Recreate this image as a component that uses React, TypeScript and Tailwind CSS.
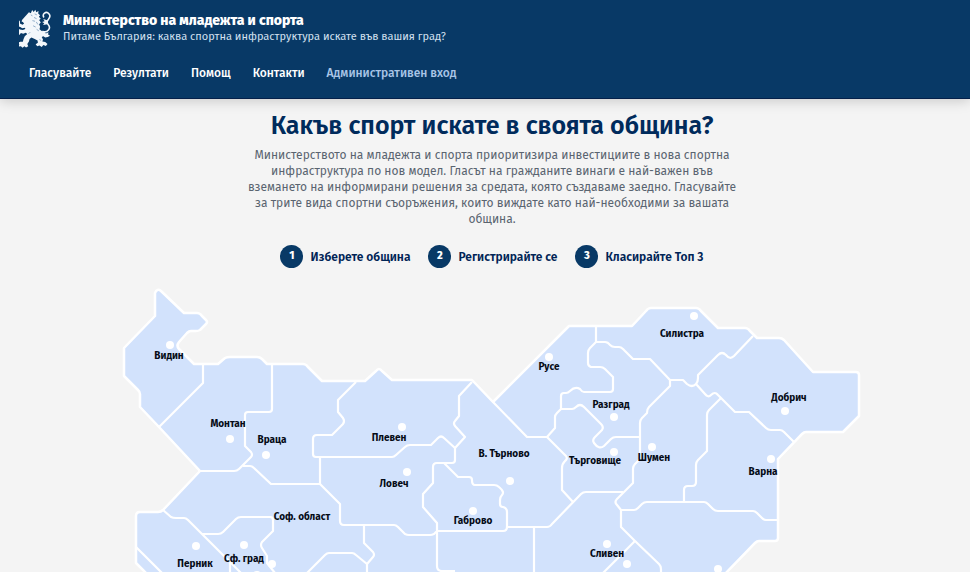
const navLinks = ['Гласувайте', 'Резултати', 'Помощ', 'Контакти'];
const steps = ['Изберете община', 'Регистрирайте се', 'Класирайте Топ 3'];

const country =
  'M155 293Q157 288 161 291L184 313H197Q200 313 202 316L206 320Q208 322 206 324L200 330Q198 331 196 331H191Q189 331 187 333L179 342Q176 346 179 349L194 364H218L225 358Q227 357 230 357H257Q260 357 262 359L267 364H303Q306 364 308 367L322 381H365L376 371Q379 367 382 371L392 380H472L493 402L569 326H632L646 311Q648 308 651 308H696Q699 308 701 311L718 328H745Q748 328 750 331L757 338H779Q782 338 784 340L813 372H856Q859 372 859 375V416L843 432H806Q804 432 802 434L778 459V538Q778 541 775 541H759Q757 541 755 543L722 577H150L136 563V516Q136 512 140 512H158Q161 512 163 510L200 471L159 427L140 407V394Q140 392 138 390L124 376V348L155 316Z';

const borders = [
  'M203 365V383L159 427',
  'M272 365V409Q272 412 269 412H248Q245 412 245 415V446L251 452Q253 455 251 457L239 469Q237 471 234 471H200',
  'M243 466H250Q252 466 254 468L271 484H320L340 504V521Q340 525 344 525H394Q396 525 398 527L405 534Q407 535 409 535H430Q432 535 434 534L437 531V523L423 507V494L433 483V467Q433 463 437 463H452Q455 463 455 460V448L465 437L455 426Q453 423 455 421L459 416V396L472 382',
  'M320 457V484',
  'M356 382L338 400V412L343 418Q345 421 343 424L332 435H317Q313 435 313 439V454Q313 457 316 457H392Q394 457 396 455L405 447Q407 445 410 445H431L438 438Q441 435 444 438L455 448',
  'M444 463L458 477H469Q472 477 472 480Q472 485 475 485H494Q497 485 499 487Q505 492 502 495Q500 497 500 500V504Q500 507 503 507Q507 508 507 512V527Q507 531 503 531H437V566Q437 571 442 571H455',
  'M507 527H547Q550 527 552 524L581 494Q583 492 586 492H623',
  'M534 527V577',
  'M493 402L527 437H547L566 456Q568 459 565 461Q562 464 562 468V490L573 502',
  'M547 437L555 428V417Q555 415 557 413L561 409V396Q561 393 564 393H566Q568 393 570 391Q575 386 580 389Q582 392 584 392H610Q613 392 613 389V377L605 369Q603 367 600 367H591Q588 366 588 363V353Q588 350 590 348L596 342V326',
  'M561 409H572Q574 409 576 407Q580 403 584 407L601 424Q604 427 602 430L595 437Q592 440 594 443Q599 450 604 446L611 439Q613 437 616 437H640',
  'M596 342H605Q608 342 610 345Q612 347 615 347H619Q621 347 623 349L633 359H650L670 380H683L687 384Q692 388 696 384Q698 382 698 378V375L718 355Q722 351 726 355Q730 360 734 356L753 336',
  'M696 384L705 394Q708 398 711 395Q715 391 718 395L735 412H749L766 428Q768 430 771 430H780Q782 430 784 432L794 442',
  'M721 398L709 410Q707 412 707 415V451L698 460Q696 462 696 465V482Q696 486 692 486H688Q684 486 684 490V502',
  'M670 380V386L649 407Q647 409 647 413L642 418Q640 420 640 423V459L635 464Q633 466 633 469V483L617 499Q614 502 617 505L621 510V527L635 541L659 564Q661 566 661 569V577',
  'M635 541L599 577',
  'M621 510H634Q636 510 638 508L642 504Q644 502 647 502H704Q706 502 708 504L713 509Q715 511 718 511H753Q755 511 757 513L762 518Q764 520 766 520H778',
  'M163 510L171 517Q173 518 176 518H184Q186 518 188 520L245 577',
  'M202 534H218Q221 534 223 532L236 519Q238 517 241 517H270Q273 517 273 520V531L262 542Q260 545 262 548L267 556V563L275 573',
  'M136 547L166 577',
  'M230 563V577',
  'M364 525V543L373 552Q375 555 373 557L367 564V577M367 564L356 555Q354 553 352 553H329Q327 553 325 555L303 577',
];

const dots = [
  [170, 345], [230, 439], [266, 455], [196, 546], [244, 545], [272, 564], [257, 575],
  [402, 427], [407, 472], [473, 511], [510, 481], [549, 357], [614, 417], [614, 452],
  [652, 447], [607, 544], [627, 564], [694, 316], [785, 411], [771, 459], [718, 569],
];

const labels: [string, number, number][] = [
  ['Видин', 169, 359], ['Монтан', 228, 427], ['Враца', 272, 443], ['Плевен', 389, 441],
  ['Ловеч', 394, 487], ['Соф. област', 302, 520], ['Перник', 195, 567], ['Сф. град', 244, 562],
  ['Габрово', 473, 524], ['В. Търново', 504, 457], ['Русе', 549, 370], ['Разград', 611, 408],
  ['Търговище', 595, 464], ['Шумен', 654, 461], ['Сливен', 607, 557], ['Силистра', 682, 337],
  ['Добрич', 789, 401], ['Варна', 763, 475],
];

function Lion() {
  return (
    <svg viewBox="30 22 100 120" className="h-10 w-8 shrink-0" aria-hidden="true">
      <path
        fill="#f3f7fb"
        d="M61 33l6 3 4-10 5 6 5-7 3 8 7-4-1 8 6 5-4 5 6 6-5 4 5 8-5 5 3 8-2 8 7 5 8 3 5 5 8-4-1 7 6 4-7 4-8 2-6-4-5 2 4 8-2 6 9 2 7 6-5 6-8-3-5 6-7-4-7 2-5-6 7-5-1-7-9-5-10-4-6 4-2 8-5 8 3 7-7 4-5-4-6 5-5-5-8 1 3-7-5-5 8-3 8 0 2-8 4-9 8-7-5-4-8 3-7-2-5 6-6-4-7 2 1-7-6-5 7-4 6-4 7 5 9 1 8-3-2-4-8 2-7-5-8 1-5-3-6 1 1-7-6-5 7-3 1-6 7 4 5-4 4 6 0 6 8 4 5-4-4-5-4-1 2-6z"
      />
      <path
        d="M103 92Q114 98 122 88Q129 80 121 71Q114 63 122 55Q130 45 124 38Q117 30 109 36Q103 42 108 49"
        fill="none"
        stroke="#f3f7fb"
        strokeWidth="5"
        strokeLinejoin="round"
      />
      <path fill="#f3f7fb" d="M118 58l-12-4 4 7-8 2 7 4-4 6 14-3z" />
      <path d="M67 41l5 3M79 38l7 3M77 49l8 4M72 59l8 2M84 63l5 8M74 75l8 4M85 86l7 5M60 100l5-5M94 118l5 3" fill="none" stroke="#8eabc8" strokeWidth="3" />
    </svg>
  );
}

export default function App() {
  return (
    <div className="min-h-screen bg-[#f4f4f4] font-['Fira_Sans','Noto_Sans',sans-serif]">
      <header className="relative border-b border-[#04204a] bg-[#083966] pt-2 pb-4 text-white shadow-[0_2px_12px_rgba(0,0,0,0.18)]">
        <div className="flex items-center gap-3 pl-[19px]">
          <Lion />
          <div className="pt-[2px]">
            <div className="text-[14px] leading-4 font-extrabold">Министерство на младежта и спорта</div>
            <p className="text-[11px] leading-4 text-[#d3e0f0]">
              Питаме България: каква спортна инфраструктура искате във вашия град?
            </p>
          </div>
        </div>
        <nav className="mt-4 flex gap-[22px] pl-[29px] text-[12px] leading-[18px] font-medium">
          {navLinks.map((link) => (
            <a key={link} href="#">{link}</a>
          ))}
          <a href="#" className="text-[#a9c5e6]">Административен вход</a>
        </nav>
      </header>

      <main className="flex flex-col items-center pl-[14px]">
        <h1 className="mt-2 text-[25px] leading-[38px] font-semibold text-[#002b5c]">
          Какъв спорт искате в своята община?
        </h1>
        <p className="mt-[2px] text-center text-[12px] leading-4 whitespace-nowrap text-[#5a6470]">
          Министерството на младежта и спорта приоритизира инвестициите в нова спортна<br />
          инфраструктура по нов модел. Гласът на гражданите винаги е най-важен във<br />
          вземането на информирани решения за средата, която създаваме заедно. Гласувайте<br />
          за трите вида спортни съоръжения, които виждате като най-необходими за вашата<br />
          община.
        </p>
        <ol className="mt-[18px] flex gap-[18px]">
          {steps.map((step, i) => (
            <li key={step} className="flex items-center gap-[7px] text-[12px] font-semibold text-[#002456]">
              <span className="flex size-[23px] items-center justify-center rounded-full bg-[#083966] text-[11px] font-extrabold text-white">
                {i + 1}
              </span>
              {step}
            </li>
          ))}
        </ol>
        <svg viewBox="120 286 745 286" className="mt-[18px] w-full max-w-[745px]" role="img" aria-label="Карта на България">
          <path d={country} fill="#d2e2fc" stroke="#fff" strokeWidth="2.5" strokeLinejoin="round" />
          <g fill="none" stroke="#fff" strokeWidth="2.2" strokeLinejoin="round">
            {borders.map((d) => <path key={d} d={d} />)}
          </g>
          {dots.map(([x, y]) => <circle key={`${x}-${y}`} cx={x} cy={y} r="4" fill="#fff" />)}
          <g className="text-[10px] font-bold" fill="#050b16" textAnchor="middle">
            {labels.map(([name, x, y]) => <text key={name} x={x} y={y}>{name}</text>)}
          </g>
        </svg>
      </main>
    </div>
  );
}
